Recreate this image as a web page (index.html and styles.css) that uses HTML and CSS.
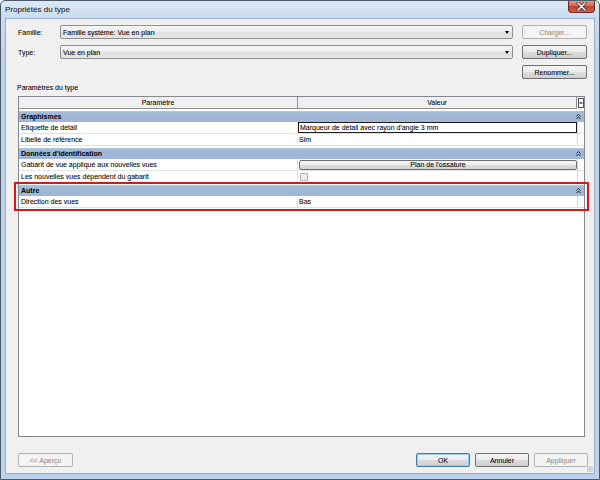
FILE: index.html
```html
<!DOCTYPE html>
<html lang="fr">
<head>
<meta charset="utf-8">
<title>Propriétés du type</title>
<link rel="stylesheet" href="styles.css">
</head>
<body>
<div class="window">
  <div class="titlebar">
    <span class="title">Propriétés du type</span>
    <div class="close">
      <svg width="11" height="9" viewBox="0 0 11 9"><path d="M2 1 L9 8 M9 1 L2 8" stroke="#3a1a1a" stroke-width="3" stroke-linecap="round"/><path d="M2 1 L9 8 M9 1 L2 8" stroke="#ffffff" stroke-width="1.6" stroke-linecap="round"/></svg>
    </div>
  </div>
  <div class="client">
    <div class="topform">
      <span class="lbl">Famille:</span>
      <div class="combo"><span>Famille système: Vue en plan</span><i class="arrow"></i></div>
      <div class="btn disabled">Charger...</div>
      <span class="lbl">Type:</span>
      <div class="combo"><span>Vue en plan</span><i class="arrow"></i></div>
      <div class="btn">Dupliquer...</div>
      <span></span><span></span>
      <div class="btn">Renommer...</div>
    </div>
    <div class="section">Paramètres du type</div>
    <div class="pgrid">
      <div class="head">
        <div class="hcell pcol">Paramètre</div>
        <div class="hcell vcol">Valeur</div>
        <div class="hcell ecol"><span class="eq">=</span></div>
      </div>
      <div class="group">
        <div class="grow"><span>Graphismes</span><svg class="chev" width="5" height="6" viewBox="0 0 5 6"><path d="M0.5 2.5 L2.5 0.5 L4.5 2.5 M0.5 5 L2.5 3 L4.5 5" fill="none" stroke="#222" stroke-width="1"/></svg></div>
        <div class="drow"><div class="pcol cell">Etiquette de détail</div><div class="vcol cell"><div class="edit">Marqueur de détail avec rayon d'angle 3 mm</div></div><div class="ecol cell"></div></div>
        <div class="drow"><div class="pcol cell">Libellé de référence</div><div class="vcol cell">Sim</div><div class="ecol cell"></div></div>
      </div>
      <div class="group">
        <div class="grow"><span>Données d'identification</span><svg class="chev" width="5" height="6" viewBox="0 0 5 6"><path d="M0.5 2.5 L2.5 0.5 L4.5 2.5 M0.5 5 L2.5 3 L4.5 5" fill="none" stroke="#222" stroke-width="1"/></svg></div>
        <div class="drow"><div class="pcol cell">Gabarit de vue appliqué aux nouvelles vues</div><div class="vcol cell"><div class="cellbtn">Plan de l'ossature</div></div><div class="ecol cell"></div></div>
        <div class="drow"><div class="pcol cell">Les nouvelles vues dépendent du gabarit</div><div class="vcol cell"><i class="check"></i></div><div class="ecol cell"></div></div>
      </div>
      <div class="group marked">
        <div class="grow"><span>Autre</span><svg class="chev" width="5" height="6" viewBox="0 0 5 6"><path d="M0.5 2.5 L2.5 0.5 L4.5 2.5 M0.5 5 L2.5 3 L4.5 5" fill="none" stroke="#222" stroke-width="1"/></svg></div>
        <div class="drow"><div class="pcol cell">Direction des vues</div><div class="vcol cell">Bas</div><div class="ecol cell"></div></div>
      </div>
    </div>
    <div class="footer">
      <div class="btn disabled wide">&lt;&lt; Aperçu</div>
      <div class="right">
        <div class="btn default">OK</div>
        <div class="btn">Annuler</div>
        <div class="btn disabled">Appliquer</div>
      </div>
    </div>
    <div class="grip"></div>
  </div>
</div>
</body>
</html>
```

FILE: styles.css
```css
html, body {
  margin: 0;
  padding: 0;
  background: #ffffff;
}
body {
  font-family: "Liberation Sans", Arial, sans-serif;
  font-size: 7px;
  color: #000;
  -webkit-text-stroke: 0.07px currentColor;
}
.window {
  width: 600px;
  height: 480px;
  box-sizing: border-box;
  border: 1px solid #4d5866;
  border-radius: 5px 5px 0 0;
  background: linear-gradient(to bottom, #dce8f5 0, #c9dbef 18px, #bdd3eb 60px, #bcd2ea 100%);
  display: flex;
  flex-direction: column;
  overflow: hidden;
}
.titlebar {
  height: 17px;
  position: relative;
  display: flex;
  align-items: center;
  padding-left: 4px;
}
.title {
  font-size: 8px;
  color: #1a1a1a;
  margin-top: -1px;
}
.close {
  position: absolute;
  right: 4px;
  top: -1px;
  width: 27px;
  height: 13px;
  box-sizing: border-box;
  border: 1px solid #6b2a26;
  border-top: none;
  border-radius: 0 0 4px 4px;
  background: linear-gradient(to bottom, #e8a493 0, #d3705e 45%, #c0402d 55%, #d0624a 100%);
  display: flex;
  align-items: center;
  justify-content: center;
}
.client {
  margin: 0 4px 5px 4px;
  flex: 1;
  border: 1px solid #99adc4;
  background: #f0f0f0;
  display: flex;
  flex-direction: column;
  position: relative;
}
.topform {
  display: grid;
  grid-template-columns: 34px 453px 65px;
  grid-template-rows: 14px 14px 14px;
  column-gap: 9px;
  row-gap: 6px;
  margin-top: 6px;
  padding-left: 11px;
  align-items: center;
}
.lbl {
  padding-left: 1px;
}
.combo {
  height: 14px;
  box-sizing: border-box;
  border: 1px solid #8e8f8f;
  border-radius: 2px;
  background: linear-gradient(to bottom, #f6f6f6 0, #ececec 50%, #dfdfdf 51%, #e6e6e6 100%);
  display: flex;
  align-items: center;
  padding-left: 2px;
  position: relative;
}
.arrow {
  position: absolute;
  right: 3px;
  top: 5px;
  width: 0;
  height: 0;
  border-left: 2.5px solid transparent;
  border-right: 2.5px solid transparent;
  border-top: 3px solid #000;
}
.btn {
  height: 14px;
  box-sizing: border-box;
  border: 1px solid #707070;
  border-radius: 2px;
  background: linear-gradient(to bottom, #f4f4f4 0, #ebebeb 50%, #dddddd 51%, #cfcfcf 100%);
  display: flex;
  align-items: center;
  justify-content: center;
  color: #000;
}
.btn.disabled {
  border-color: #adb2b5;
  background: #f4f4f4;
  color: #8f8f8f;
}
.btn.default {
  border-color: #3c7fb1;
  box-shadow: inset 0 0 0 1px #94cdf0;
}
.section {
  margin-top: 4px;
  padding-left: 11px;
  height: 10px;
  line-height: 10px;
}
.pgrid {
  margin: 3px 0 0 12px;
  width: 567px;
  height: 341px;
  box-sizing: border-box;
  border: 1px solid #828790;
  background: #ffffff;
  display: flex;
  flex-direction: column;
}
.head {
  display: flex;
  height: 12px;
  background: #f0f0f0;
}
.hcell {
  box-sizing: border-box;
  border-right: 1px solid #8f8f8f;
  border-bottom: 1px solid #8f8f8f;
  display: flex;
  align-items: center;
  justify-content: center;
}
.pcol { width: 279px; flex: none; box-sizing: border-box; }
.vcol { width: 279px; flex: none; box-sizing: border-box; }
.ecol { flex: 1; box-sizing: border-box; }
.hcell.ecol {
  border-right: none;
  border-bottom: none;
  background: #f0f0f0;
  padding: 1px 0 1px 1px;
}
.eq {
  width: 6px;
  height: 10px;
  box-sizing: border-box;
  border: 1px solid #555;
  background: #fafafa;
  display: flex;
  align-items: center;
  justify-content: center;
  font-size: 6px;
  line-height: 1;
}
.group {
  margin-top: 2px;
  display: flex;
  flex-direction: column;
}
.group.marked {
  outline: 2px solid #e1121b;
  outline-offset: 1px;
  margin-left: -2px;
  margin-right: -2px;
  padding-left: 2px;
  padding-right: 2px;
}
.grow {
  height: 11px;
  background: linear-gradient(to bottom, #b3c7df 0, #a0b8d5 2px, #9fb7d4 100%);
  font-weight: bold;
  -webkit-text-stroke: 0;
  display: flex;
  align-items: center;
  justify-content: space-between;
  padding: 0 3px 0 2px;
}
.chev {
  display: block;
}
.drow {
  display: flex;
  height: 12px;
  box-sizing: border-box;
  border-bottom: 1px solid #e2e2e2;
}
.cell {
  display: flex;
  align-items: center;
}
.drow .pcol {
  padding-left: 2px;
  border-right: 1px solid #e2e2e2;
}
.drow .vcol {
  padding-left: 1px;
}
.drow .ecol {
  border-left: 1px solid #d6d6d6;
}
.edit {
  margin-left: -1px;
  width: 279px;
  height: 11px;
  box-sizing: border-box;
  border: 1px solid #1e1e1e;
  padding-left: 1px;
  display: flex;
  align-items: center;
  background: #fff;
}
.cellbtn {
  width: 278px;
  height: 10px;
  box-sizing: border-box;
  border: 1px solid #707070;
  border-radius: 2px;
  background: linear-gradient(to bottom, #f6f6f6 0, #ececec 50%, #dedede 51%, #d2d2d2 100%);
  display: flex;
  align-items: center;
  justify-content: center;
}
.check {
  margin-left: 1px;
  width: 8px;
  height: 8px;
  box-sizing: border-box;
  border: 1px solid #b7b7b7;
  background: #ececec;
}
.footer {
  margin-top: 16px;
  padding: 0 6px 0 12px;
  display: flex;
  justify-content: space-between;
}
.footer .btn {
  width: 54px;
}
.footer .btn.wide {
  width: 55px;
}
.right {
  display: flex;
  gap: 5px;
}
.grip {
  position: absolute;
  right: 1px;
  bottom: 1px;
  width: 6px;
  height: 6px;
  background-image: radial-gradient(circle, #b0b0b0 0.6px, transparent 0.8px);
  background-size: 2px 2px;
}
```
